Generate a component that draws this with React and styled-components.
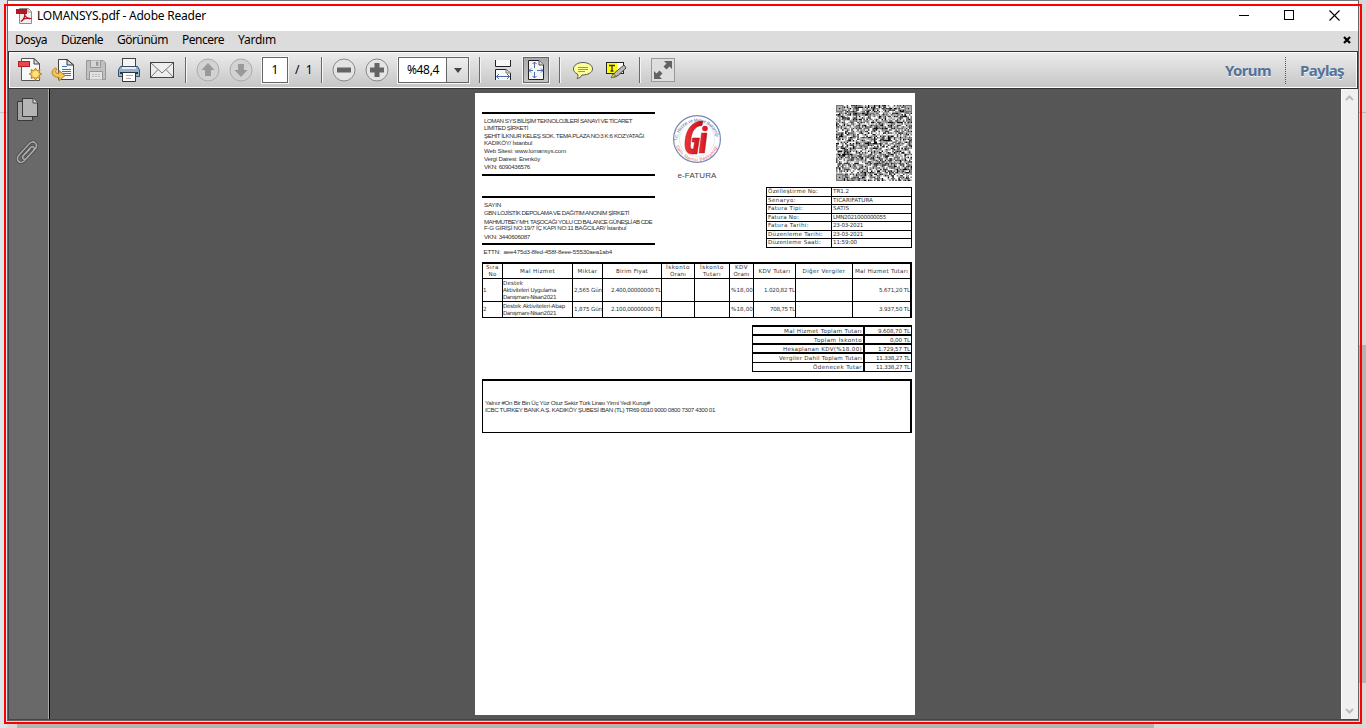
import React, { useLayoutEffect, useRef, useState } from "react";
import styled, { createGlobalStyle } from "styled-components";

const Global = createGlobalStyle`
  * { box-sizing: border-box; }
  html, body { margin: 0; padding: 0; overflow: hidden; }
  body { font-family: "Noto Sans", "Open Sans", sans-serif; font-size: 12px; color: #000; }
  svg { display: block; flex: none; }
`;

/* Spreads a line of text over a given width through its letter spacing. */
const Line = styled.span`
  display: block;
  width: max-content;
  white-space: pre;
  flex: none;
`;
function Fit({ w, children }) {
  const ref = useRef(null);
  const [spacing, setSpacing] = useState(null);
  useLayoutEffect(() => {
    const natural = ref.current.getBoundingClientRect().width;
    setSpacing((w - natural) / ref.current.textContent.length);
  }, [w]);
  return (
    <Line ref={ref} style={spacing === null ? undefined : { letterSpacing: `${spacing}px` }}>
      {children}
    </Line>
  );
}

const Desktop = styled.div`
  position: relative;
  width: 1366px;
  height: 728px;
  padding: 0 7px 7px 7px;
  background:
    linear-gradient(#b4b4b4, #b4b4b4) 17px 724px / 1137px 4px no-repeat,
    linear-gradient(#b4b4b4, #b4b4b4) 1359px 345px / 7px 338px no-repeat,
    linear-gradient(#bfc3c8, #bfc3c8) 0 112px / 7px 1px no-repeat,
    linear-gradient(#b8b8b8, #b8b8b8) 1359px 112px / 7px 1px no-repeat,
    linear-gradient(90deg, #dfe4ea 0 7px, #d9d9d8 7px);
`;
const Highlight = styled.div`
  position: absolute;
  left: 4px;
  top: 4px;
  width: 1358px;
  height: 720px;
  border: 2px solid #fe0000;
  pointer-events: none;
`;
const Window = styled.div`
  display: flex;
  flex-direction: column;
  width: 1352px;
  height: 721px;
  border: 1px solid #666;
  border-top-color: #777;
  background: #fff;
`;
const TitleBar = styled.div`
  display: flex;
  align-items: center;
  height: 30px;
  padding: 0 15px 1px 8px;
  gap: 5px;
  background: #fff;
`;
const Spacer = styled.div`flex: 1;`;
const WindowButtons = styled.div`
  display: flex;
  align-items: center;
  gap: 34px;
  padding-right: 3px;
`;
const MenuBar = styled.div`
  display: flex;
  align-items: center;
  gap: 14px;
  height: 20px;
  padding: 0 7px 3px;
  background: #dcdcdc;
`;
const Toolbar = styled.div`
  display: flex;
  align-items: center;
  height: 38px;
  border: 1px solid #333;
  box-shadow: inset 0 0 0 1px #fafafa;
  background: linear-gradient(#ececec, #c5c5c5);
  padding: 0 13px 0 8px;
`;
const Slot = styled.div`
  display: flex;
  align-items: center;
  justify-content: center;
  width: ${(p) => p.$w}px;
  height: 28px;
`;
const Divider = styled.div`
  width: 2px;
  height: 26px;
  margin: 0 ${(p) => p.$right}px 0 ${(p) => p.$left}px;
  background: linear-gradient(90deg, #6a6a6a 50%, #f5f5f5 50%);
`;
const PageBox = styled.div`
  display: flex;
  align-items: center;
  justify-content: center;
  width: 26px;
  height: 26px;
  border: 1px solid #666;
  outline: 1px solid #f5f5f5;
  background: #fff;
  padding-bottom: 1px;
`;
const PageCount = styled.div`
  width: 31px;
  padding: 0 0 1px 7px;
  white-space: pre;
`;
const Zoom = styled.div`
  display: flex;
  width: 71px;
  height: 26px;
  border: 1px solid #666;
  outline: 1px solid #f5f5f5;
  background: #fff;
`;
const ZoomValue = styled.div`
  display: flex;
  align-items: center;
  flex: 1;
  padding: 0 0 1px 8px;
`;
const ZoomArrow = styled.div`
  display: flex;
  align-items: center;
  justify-content: center;
  width: 22px;
  border-left: 1px solid #666;
  background: linear-gradient(#efefef, #d6d6d6);
`;
const FitButton = styled.div`
  display: flex;
  align-items: center;
  justify-content: center;
  width: 26px;
  height: 26px;
  border: 1px solid #666;
  outline: 1px solid #f5f5f5;
  background: linear-gradient(#aaa, #c6c6c6);
`;
const PanelLink = styled.div`
  font-weight: 700;
  font-size: 15px;
  color: #557299;
  text-shadow: 0 1px #f4f4f4;
`;
const Dots = styled.div`
  height: 27px;
  margin: 0 14px;
  border-left: 1px dotted #555;
`;
const Body = styled.div`
  display: flex;
  flex: 1;
  min-height: 0;
  border-left: 1px solid #444;
  border-bottom: 1px solid #444;
`;
const Sidebar = styled.div`
  display: flex;
  flex-direction: column;
  align-items: flex-start;
  gap: 18px;
  width: 41px;
  padding: 8px 0 0 7px;
  background: #696969;
  border-right: 1px solid #000;
  box-shadow: inset -1px 0 #aaa;
`;
const Stage = styled.div`
  flex: 1;
  padding: 4px 0 0 425px;
  background: #565656;
`;
const Scrollbar = styled.div`
  display: flex;
  flex-direction: column;
  justify-content: space-between;
  align-items: center;
  width: 17px;
  padding: 6px 1px 4px 0;
  background: #f0f0f0;
  border-left: 1px solid #fff;
`;
const Sheet = styled.div`
  width: 440px;
  height: 622px;
  padding: 12px 3px 0 7px;
  background: #fff;
  color: #303030;
  font-family: "DejaVu Sans", sans-serif;
  font-size: 5.6px;
  line-height: 7px;
`;
const SheetTop = styled.div`
  display: flex;
  justify-content: space-between;
  height: 157px;
`;
const Parties = styled.div`
  width: 173px;
  padding-top: 7px;
  font-family: "Liberation Sans", sans-serif;
  font-size: 6.2px;
`;
const Party = styled.div`
  height: ${(p) => p.$h}px;
  margin-bottom: ${(p) => p.$gap}px;
  padding: 3px 0 0 2px;
  border-top: 2px solid #000;
  border-bottom: 2px solid #000;
`;
const PartyLine = styled.div`
  height: ${(p) => p.$h || 7}px;
`;
const Emblem = styled.div`
  display: flex;
  flex-direction: column;
  align-items: center;
  width: 60px;
  margin-right: 27px;
  padding: 9px 0 0;
  gap: 8px;
  font-family: "Liberation Sans", sans-serif;
  font-size: 8px;
  color: #444;
`;
const Meta = styled.div`
  display: flex;
  flex-direction: column;
  align-items: flex-end;
  gap: 6px;
  width: 146px;
`;
const InfoTable = styled.div`
  width: 146px;
  border: 1px solid #000;
  border-bottom: 0;
`;
const InfoRow = styled.div`
  display: grid;
  grid-template-columns: 64px 1fr;
  height: 8.58px;
  border-bottom: 1px solid #000;
`;
const InfoCell = styled.div`
  padding-left: 1px;
  line-height: 7.6px;
  border-left: ${(p) => (p.$value ? "1px solid #000" : "0")};
`;
const Items = styled.div`
  display: grid;
  grid-template-columns: 20px 70px 30px 59px 33px 35px 24px 42px 57px 58px;
  grid-template-rows: 15px 23px 16px;
  width: 430px;
  border-top: 2px solid #000;
  border-left: 1px solid #000;
  border-right: 1px solid #000;
`;
const Cell = styled.div`
  display: flex;
  flex-direction: column;
  justify-content: center;
  align-items: ${(p) => p.$align || "center"};
  border-right: 1px solid #000;
  border-bottom: 1px solid #000;
  line-height: 7px;
`;
const Totals = styled.div`
  width: 160px;
  margin: 7px 0 7px auto;
  border: 1px solid #000;
  border-top-width: 2px;
  border-bottom: 0;
`;
const TotalRow = styled.div`
  display: grid;
  grid-template-columns: 112px 1fr;
  height: 9px;
  border-bottom: ${(p) => p.$line}px solid #000;
`;
const TotalCell = styled.div`
  display: flex;
  justify-content: flex-end;
  padding-right: 1px;
  line-height: 8px;
  border-right: ${(p) => (p.$label ? "2px solid #000" : "0")};
`;
const Note = styled.div`
  width: 430px;
  height: 54px;
  padding: 18px 0 0 2px;
  border: 1px solid #000;
  border-top-width: 2px;
  border-right-width: 2px;
  font-family: "Liberation Sans", sans-serif;
  font-size: 6.2px;
`;

const PdfLogo = () => (
  <svg width="16" height="16" viewBox="0 0 16 16">
    <path d="M3.500 .5H12.500L15.500 3.500V15.500H3.500Z" fill="#f5eeee" stroke="#8d8d8d" />
    <path d="M12 .5V4H15.500" fill="#fff" stroke="#8d8d8d" />
    <path d="M0 1H11V6H0Z" fill="#b01822" />
    <path d="M5 13.500C8 12 9.500 7 8.500 5C8 7 11 11.500 14.500 10.500C11 9.500 7 11 5 13.500Z" fill="none" stroke="#b01822" strokeWidth="1.300" />
  </svg>
);
const Minimise = () => (
  <svg width="11" height="11"><path d="M0 5.500H10" stroke="#000" /></svg>
);
const Maximise = () => (
  <svg width="11" height="11"><rect x=".5" y=".5" width="9" height="9" fill="none" stroke="#000" /></svg>
);
const Close = () => (
  <svg width="11" height="11"><path d="M.5 .5L10.500 10.500M10.500 .5L.5 10.500" stroke="#000" strokeWidth="1.100" /></svg>
);
const MenuClose = () => (
  <svg width="8" height="8"><path d="M1 1L7 7M7 1L1 7" stroke="#000" strokeWidth="2.200" /></svg>
);
const CreatePdf = () => (
  <svg width="26" height="26" viewBox="0 0 26 26">
    <path d="M4.500 1.500H17L22.500 7V23.500H4.500Z" fill="#f8f8f8" stroke="#555" />
    <path d="M17 1.500V7H22.500Z" fill="#ddd" stroke="#444" />
    <rect x="1.500" y="4.500" width="11" height="5" fill="#ec4650" stroke="#b32028" />
    <path d="M18.500 11L20 13.700L23 12.700L22.200 15.600L24.800 17L22.200 18.500L23 21.400L20 20.500L18.500 23.200L17 20.500L14 21.400L14.700 18.500L12.200 17L14.700 15.600L14 12.700L17 13.700Z" fill="#f2c044" stroke="#b98528" />
    <circle cx="18.500" cy="17" r="3" fill="#ffe387" />
  </svg>
);
const Export = () => (
  <svg width="26" height="26" viewBox="0 0 26 26">
    <path d="M8.500 2.500H17L23.500 8V22.500H8.500Z" fill="#f8f8f8" stroke="#444" />
    <path d="M17 2.500V8H23.500Z" fill="#ddd" stroke="#333" />
    <path d="M12 9.500H17M12 12.500H21M12 14.500H21M13 16.500H21M15 18.500H21" stroke="#3878be" />
    <path d="M5 11C.5 14 1 20 9 20.500V24L15 18.500L9 13.500V16.500C5.500 17 4.500 14 7 12Z" fill="#f5c451" stroke="#b18023" />
  </svg>
);
const Save = () => (
  <svg width="22" height="22" viewBox="0 0 22 22" stroke="#969696">
    <path d="M1.500 1.500H18L20.500 4V20.500H1.500Z" fill="#c0c0c0" />
    <path d="M5.500 1.500V8.500H15.500V1.500" fill="#d6d6d6" /><path d="M11.500 3V6.500H13V3Z" fill="#aaa" />
    <path d="M4.500 20.500V12.500H17.500V20.500" fill="#e2e2e2" /><path d="M7 15.500H15M7 17.500H15" stroke="#bbb" strokeDasharray="2 1" />
  </svg>
);
const Print = () => (
  <svg width="24" height="26" viewBox="0 0 24 26">
    <rect x="5.500" y="1.500" width="13" height="11" fill="#f5f5f5" stroke="#444" />
    <path d="M3.500 9.500H20.500L22.500 13V19.500H1.500V13Z" fill="#8eb5d6" stroke="#395068" />
    <path d="M5 10H19V12H5Z" fill="#e9edf1" />
    <path d="M3 16H21" stroke="#263848" strokeWidth="2" />
    <path d="M5.500 15.500H18.500V24.500H5.500Z" fill="#fff" stroke="#333" /><path d="M9 18.500H16M9 21.500H14" stroke="#aaa" />
  </svg>
);
const Mail = () => (
  <svg width="26" height="18" viewBox="0 0 26 18">
    <rect x="1.500" y="1.500" width="23" height="15" fill="#eee" stroke="#444" />
    <path d="M2 2L13 12L24 2M2 16L9 8.500M24 16L17 8.500" fill="none" stroke="#777" />
  </svg>
);
const Round = ({ d, off }) => (
  <svg width="24" height="24" viewBox="0 0 24 24">
    <circle cx="12" cy="12" r="11" fill={off ? "#d2d2d2" : "#e4e4e4"} stroke={off ? "#ababab" : "#888"} />
    <path d={d} fill={off ? "#999" : "#646464"} />
  </svg>
);
const FitWidth = () => (
  <svg width="18" height="20" viewBox="0 0 18 20">
    <path d="M1.500 0V6.500H16.500V0" fill="#f8f8f8" stroke="#222" />
    <path d="M1.500 20V9.500H12L16.500 13V20" fill="#f8f8f8" stroke="#222" /><path d="M12 9.500V13H16.500" fill="#ddd" stroke="#777" />
    <path d="M2 16.500H16M5 14L2.500 16.500L5 19M13 14L15.500 16.500L13 19" fill="none" stroke="#4b6cac" />
  </svg>
);
const FitPage = () => (
  <svg width="18" height="20" viewBox="0 0 18 20">
    <path d="M1.500 .5H12L16.500 5V19.500H1.500Z" fill="#f5f5f5" stroke="#222" /><path d="M12 .5V5H16.500" fill="#ddd" stroke="#555" />
    <path d="M7.500 2V8M7.500 12V18M2 10.500H6M10 10.500H16M5.500 4L7.500 2L9.500 4M5.500 16L7.500 18L9.500 16M4 8.500L2 10.500L4 12.500M14 8.500L16 10.500L14 12.500" fill="none" stroke="#4b6cac" />
  </svg>
);
const Comment = () => (
  <svg width="22" height="20" viewBox="0 0 22 20">
    <path d="M11 2.500C16 2.500 20.500 5 20.500 9C20.500 12.500 16 15 10 15C9 17.500 7 18 5 18.500C6.500 17 6 15.500 5.500 14C2.500 12.500 1.500 11 1.500 9C1.500 5 6 2.500 11 2.500Z" fill="#ffff9a" stroke="#555" />
    <path d="M6 7.500H16M6 9.500H16M6 11.500H13" stroke="#999968" />
  </svg>
);
const HighlightText = () => (
  <svg width="22" height="20" viewBox="0 0 22 20">
    <rect x="1.500" y="2.500" width="17" height="11" fill="#fffff1" stroke="#222" /><rect x="2" y="3" width="10" height="10" fill="#ff0" />
    <path d="M4 5.500H10M7 5.500V11M5.500 11H8.500" stroke="#333" strokeWidth="1.300" />
    <path d="M19 5L21 8L13 15.500L10 17L8 17L8 15L10 12.500Z" fill="#bbb" stroke="#444" /><path d="M6 18L8 14L11 16Z" fill="#eee13c" stroke="#777722" />
  </svg>
);
const Expand = () => (
  <svg width="24" height="24" viewBox="0 0 24 24">
    <rect x=".5" y=".5" width="23" height="23" fill="#dedede" stroke="#999" />
    <path d="M13 3H21V11L18.500 8.500L15.500 11.500L12.500 8.500L15.500 5.500ZM3 13L5.500 15.500L8.500 12.500L11.500 15.500L8.500 18.500L11 21H3Z" fill="#636363" />
  </svg>
);
const PagesIcon = () => (
  <svg width="24" height="25" viewBox="0 0 24 25">
    <path d="M1.500 4.500H16.500V23.500H1.500Z" fill="#a5a5a5" stroke="#393939" />
    <path d="M6.500 1.500H17L21.500 6V19.500H6.500Z" fill="#b5b5b5" stroke="#393939" /><path d="M17 1.500V6H21.500" fill="#ddd" stroke="#444" />
  </svg>
);
const ClipIcon = () => (
  <svg width="22" height="25" viewBox="0 0 22 25" fill="none">
    <path d="M6 17L14 8C17 5 20 8 17 11L8 21C4 25-1 20 3 15L13 4C17-1 23 4 19 9L11 18C8 21 5 18 8 15L14 9" stroke="#444" strokeWidth="3" />
    <path d="M6 17L14 8C17 5 20 8 17 11L8 21C4 25-1 20 3 15L13 4C17-1 23 4 19 9L11 18C8 21 5 18 8 15L14 9" stroke="#aaa" strokeWidth="1.600" />
  </svg>
);
const Chevron = ({ down }) => (
  <svg width="9" height="7"><path d={down ? "M1 1L4.500 4.500L8 1" : "M1 5L4.500 1.500L8 5"} fill="none" stroke="#bcbcbc" strokeWidth="2" /></svg>
);

const Seal = () => (
  <svg width="50" height="50" viewBox="0 0 50 50">
    <defs>
      <path id="arcTop" d="M5.500 27A19.500 19.500 0 0 1 44.500 27" />
      <path id="arcBottom" d="M3 25A22 22 0 0 0 47 25" />
      <linearGradient id="red" x1="0" x2="1"><stop stopColor="#f03338" /><stop offset="1" stopColor="#c80d18" /></linearGradient>
    </defs>
    <circle cx="25" cy="25" r="23.400" fill="#fff" stroke="#7887b6" strokeWidth="1.200" />
    <circle cx="25" cy="25" r="17.500" fill="#fff" stroke="#d7dae4" strokeWidth=".6" />
    <g fontFamily="Liberation Sans" fontSize="4.400">
      <text fill="#53669d"><textPath href="#arcTop" textLength="57">T.C. Hazine ve Maliye Bakanlığı</textPath></text>
      <text fill="#d65863"><textPath href="#arcBottom" startOffset="7" textLength="54">Gelir İdaresi Başkanlığı</textPath></text>
    </g>
    <path d="M31 7C20 7 14 15 13 28C12.500 36 15 40 20 40H25L27.500 24H20.500L20 28H22.500L21.500 35H20C18 35 18.300 31 18.700 27C19.500 17 23 12 30 11.500Z" fill="url(#red)" stroke="#a31520" strokeWidth=".5" />
    <path d="M29.500 19H35L32.500 39H27Z" fill="url(#red)" stroke="#a31520" strokeWidth=".4" /><circle cx="33" cy="14.500" r="2.800" fill="#dc1b25" />
  </svg>
);

const QR_CELLS = (() => {
  const n = 50;
  const tones = { "#111": "", "#444": "", "#777": "", "#aaa": "" };
  const keys = Object.keys(tones);
  let seed = 90210;
  for (let y = 0; y < n; y++) {
    for (let x = 0; x < n; x++) {
      seed = (seed * 1103515245 + 12345) % 2147483648;
      const v = Math.floor((seed / 2147483648) * 5.6);
      const cx = Math.min(x, n - 1 - x);
      const cy = Math.min(y, n - 1 - y);
      const finder = cx < 5 && cy < 5 && !(x > n / 2 && y > n / 2);
      const ring = Math.max(Math.abs(cx - 2), Math.abs(cy - 2));
      const tone = finder ? (ring === 1 ? "#aaa" : ring === 0 ? "#111" : "#777") : keys[v];
      if (tone) tones[tone] += `M${x} ${y}h1v1h-1z`;
    }
  }
  return tones;
})();
const QrCode = () => (
  <svg width="76" height="76" viewBox="0 0 50 50">
    {Object.entries(QR_CELLS).map(([fill, d]) => <path key={fill} d={d} fill={fill} />)}
  </svg>
);

const MENU = [["Dosya", 32], ["Düzenle", 42], ["Görünüm", 51], ["Pencere", 42], ["Yardım", 38]];
const SELLER = [
  ["LOMAN SYS BİLİŞİM TEKNOLOJİLERİ SANAYİ VE TİCARET", 148, 7],
  ["LİMİTED ŞİRKETİ", 44, 8],
  ["ŞEHİT İLKNUR KELEŞ SOK. TEMA PLAZA NO:3 K:6 KOZYATAĞI", 160, 7],
  ["KADIKÖY/ İstanbul", 48, 8],
  ["Web Sitesi: www.lomansys.com", 82, 8],
  ["Vergi Dairesi: Erenköy", 56, 8],
  ["VKN: 6090436576", 46, 7],
];
const BUYER = [
  ["SAYIN", 17, 8],
  ["GBN LOJİSTİK DEPOLAMA VE DAĞITIM ANONİM ŞİRKETİ", 145, 9],
  ["MAHMUTBEY MH. TAŞOCAĞI YOLU CD BALANCE GÜNEŞLİ AB CDE", 168, 6],
  ["F-G GİRİŞİ NO:19/7 İÇ KAPI NO:11 BAĞCILAR/ İstanbul", 142, 9],
  ["VKN: 3440606087", 46, 7],
];
const INFO = [
  ["Özelleştirme No:", 50, "TR1.2", 16],
  ["Senaryo:", 28, "TICARIFATURA", 40],
  ["Fatura Tipi:", 35, "SATIS", 16],
  ["Fatura No:", 31, "LMN2021000000055", 53],
  ["Fatura Tarihi:", 41, "23-03-2021", 30],
  ["Düzenleme Tarihi:", 55, "23-03-2021", 30],
  ["Düzenleme Saati:", 53, "11:59:00", 24],
];
const HEADS = [
  [["Sıra", 13], ["No", 8]], [["Mal Hizmet", 35]], [["Miktar", 20]], [["Birim Fiyat", 32]],
  [["İskonto", 24], ["Oranı", 16]], [["İskonto", 24], ["Tutarı", 18]], [["KDV", 13], ["Oranı", 16]],
  [["KDV Tutarı", 32]], [["Diğer Vergiler", 43]], [["Mal Hizmet Tutarı", 53]],
];
const ROWS = [
  [[["1", 3]], [["Destek", 20], ["Aktiviteleri Uygulama", 53], ["Danışmanı-Nisan2021", 53]], [["2,565 Gün", 28]],
    [["2.400,00000000 TL", 50]], [], [], [["%18,00", 22]], [["1.020,82 TL", 31]], [], [["5.671,20 TL", 31]]],
  [[["2", 3]], [["Destek Aktiviteleri-Abap", 62], ["Danışmanı-Nisan2021", 53]], [["1,875 Gün", 28]],
    [["2.100,00000000 TL", 50]], [], [], [["%18,00", 22]], [["708,75 TL", 25]], [], [["3.937,50 TL", 31]]],
];
const TOTALS = [
  ["Mal Hizmet Toplam Tutarı", 78, "9.608,70 TL", 32, 2],
  ["Toplam İskonto", 48, "0,00 TL", 20, 2],
  ["Hesaplanan KDV(%18.00)", 79, "1.729,57 TL", 32, 2],
  ["Vergiler Dahil Toplam Tutarı", 83, "11.338,27 TL", 34, 1],
  ["Ödenecek Tutar", 49, "11.338,27 TL", 34, 1],
];

const ARROW_UP = "M12 5L18.500 12H15V18H9V12H5.500Z";
const ARROW_DOWN = "M12 19L18.500 12H15V6H9V12H5.500Z";

export default function App() {
  return (
    <Desktop>
      <Global />
      <Window>
        <TitleBar>
          <PdfLogo />
          <Fit w={169}>LOMANSYS.pdf - Adobe Reader</Fit>
          <Spacer />
          <WindowButtons><Minimise /><Maximise /><Close /></WindowButtons>
        </TitleBar>
        <MenuBar>
          {MENU.map(([label, w]) => <Fit key={label} w={w}>{label}</Fit>)}
          <Spacer />
          <MenuClose />
        </MenuBar>
        <Toolbar>
          <Slot $w={25}><CreatePdf /></Slot>
          <Slot $w={42}><Export /></Slot>
          <Slot $w={24}><Save /></Slot>
          <Slot $w={42}><Print /></Slot>
          <Slot $w={24}><Mail /></Slot>
          <Divider $left={11} $right={9} />
          <Round off d={ARROW_UP} />
          <Slot $w={9} />
          <Round off d={ARROW_DOWN} />
          <Slot $w={9} />
          <PageBox>1</PageBox>
          <PageCount>/  1</PageCount>
          <Divider $left={2} $right={9} />
          <Round d="M5 9.500H19V14.500H5Z" />
          <Slot $w={9} />
          <Round d="M9.500 5H14.500V9.500H19V14.500H14.500V19H9.500V14.500H5V9.500H9.500Z" />
          <Slot $w={9} />
          <Zoom>
            <ZoomValue><Fit w={32}>%48,4</Fit></ZoomValue>
            <ZoomArrow><svg width="8" height="5"><path d="M0 0H8L4 5Z" fill="#444" /></svg></ZoomArrow>
          </Zoom>
          <Divider $left={10} $right={13} />
          <FitWidth />
          <Slot $w={11} />
          <FitButton><FitPage /></FitButton>
          <Divider $left={10} $right={11} />
          <Comment />
          <Slot $w={11} />
          <HighlightText />
          <Divider $left={12} $right={10} />
          <Expand />
          <Spacer />
          <PanelLink><Fit w={46}>Yorum</Fit></PanelLink>
          <Dots />
          <PanelLink><Fit w={44}>Paylaş</Fit></PanelLink>
        </Toolbar>
        <Body>
          <Sidebar><PagesIcon /><ClipIcon /></Sidebar>
          <Stage>
            <Sheet>
              <SheetTop>
                <Parties>
                  <Party $h={64} $gap={20}>
                    {SELLER.map(([t, w, h]) => <PartyLine key={t} $h={h}><Fit w={w}>{t}</Fit></PartyLine>)}
                  </Party>
                  <Party $h={49} $gap={3}>
                    {BUYER.map(([t, w, h]) => <PartyLine key={t} $h={h}><Fit w={w}>{t}</Fit></PartyLine>)}
                  </Party>
                  <PartyLine><Fit w={130}>{" ETTN:  aee475d3-8fed-458f-8eee-55530aea1ab4"}</Fit></PartyLine>
                </Parties>
                <Emblem><Seal /><Fit w={39}>e-FATURA</Fit></Emblem>
                <Meta>
                  <QrCode />
                  <InfoTable>
                    {INFO.map(([k, kw, v, vw]) => (
                      <InfoRow key={k}>
                        <InfoCell><Fit w={kw}>{k}</Fit></InfoCell>
                        <InfoCell $value><Fit w={vw}>{v}</Fit></InfoCell>
                      </InfoRow>
                    ))}
                  </InfoTable>
                </Meta>
              </SheetTop>
              <Items>
                {HEADS.map((lines, i) => (
                  <Cell key={i}>{lines.map(([t, w]) => <Fit key={t} w={w}>{t}</Fit>)}</Cell>
                ))}
                {ROWS.map((row, r) => row.map((lines, i) => (
                  <Cell key={`${r}-${i}`} $align={i < 2 ? "flex-start" : "flex-end"}>
                    {lines.map(([t, w]) => <Fit key={t} w={w}>{t}</Fit>)}
                  </Cell>
                )))}
              </Items>
              <Totals>
                {TOTALS.map(([k, kw, v, vw, line]) => (
                  <TotalRow key={k} $line={line}>
                    <TotalCell $label><Fit w={kw}>{k}</Fit></TotalCell>
                    <TotalCell><Fit w={vw}>{v}</Fit></TotalCell>
                  </TotalRow>
                ))}
              </Totals>
              <Note>
                <Fit w={165}>Yalnız #On Bir Bin Üç Yüz Otuz Sekiz Türk Lirası Yirmi Yedi Kuruş#</Fit>
                <Fit w={230}>ICBC TURKEY BANK A.Ş. KADIKÖY ŞUBESİ IBAN (TL) TR69 0010 9000 0800 7307 4300 01</Fit>
              </Note>
            </Sheet>
          </Stage>
          <Scrollbar><Chevron /><Chevron down /></Scrollbar>
        </Body>
      </Window>
      <Highlight />
    </Desktop>
  );
}
